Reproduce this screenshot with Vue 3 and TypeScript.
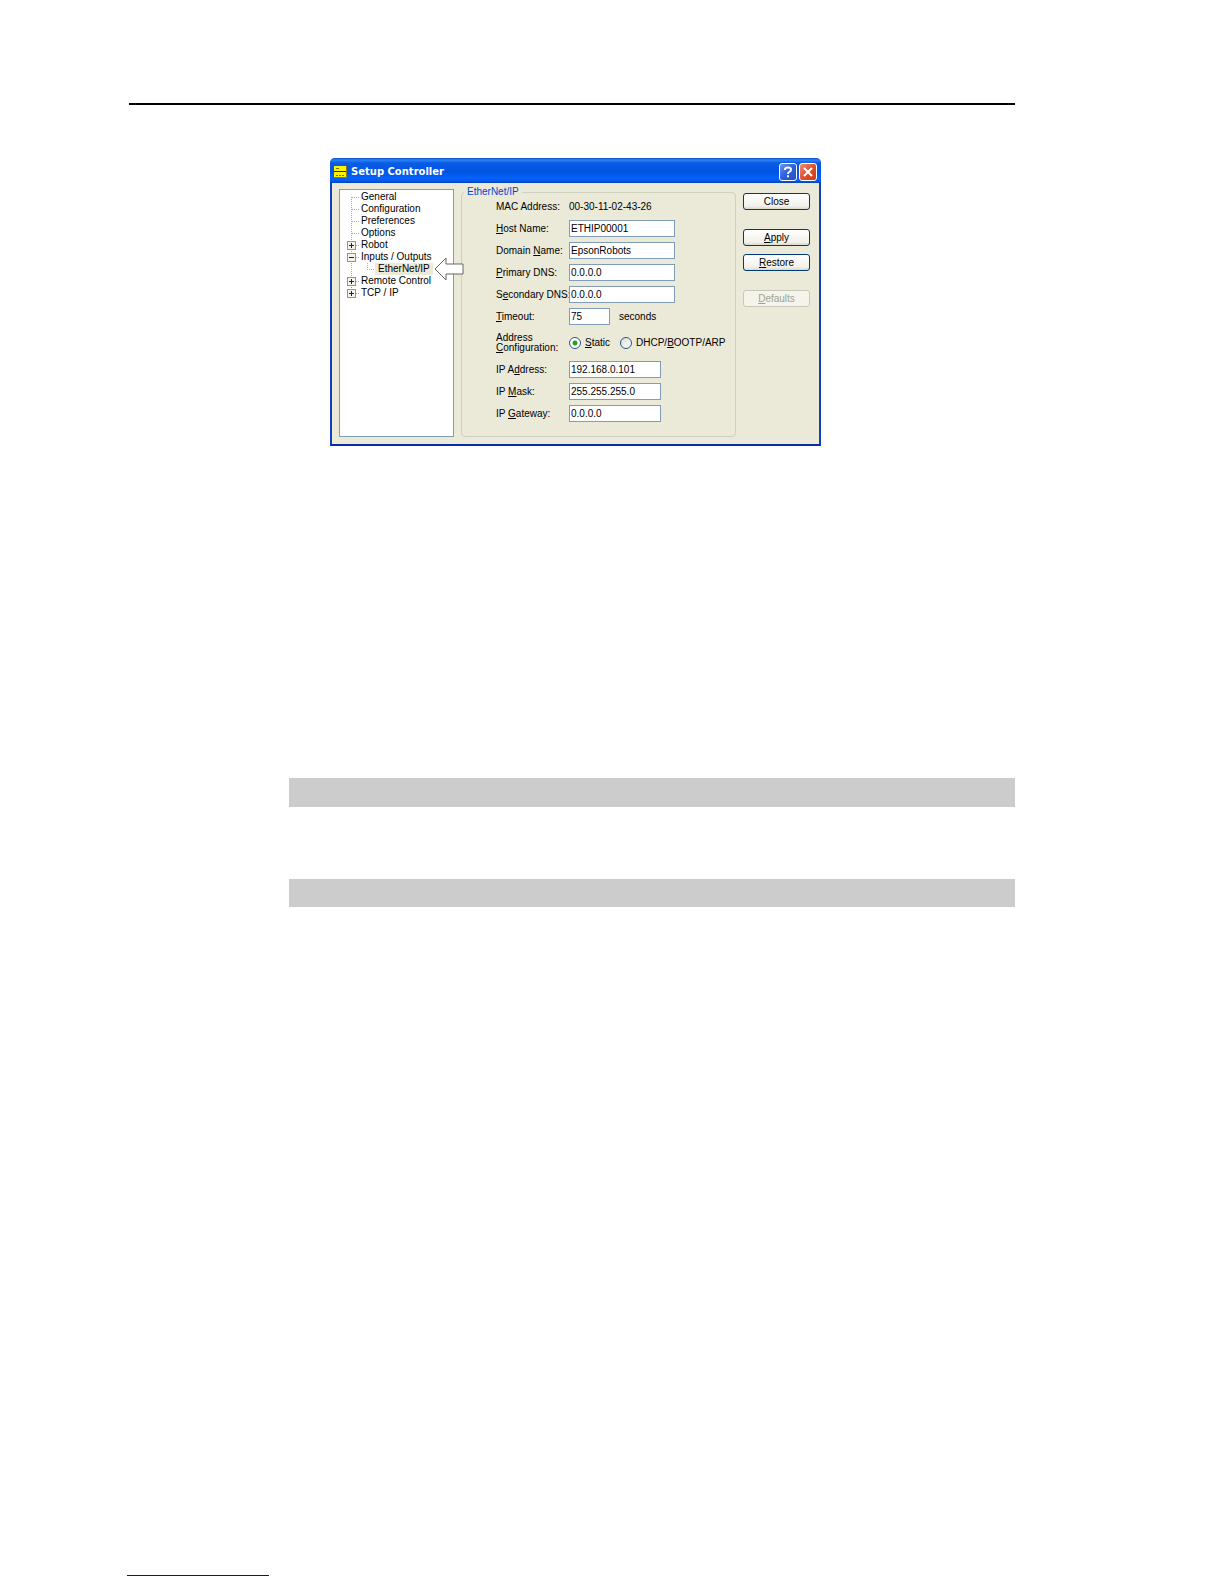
<script setup lang="ts">
import { ref } from 'vue'

type Caption = [before: string, key: string, after: string]

interface TreeRow {
  label: string
  box?: 'plus' | 'minus'
  child?: boolean
  first?: boolean
  last?: boolean
}

interface Field {
  id: string
  caption: Caption
  size: 'wide' | 'medium' | 'short'
  value: string
  unit?: string
}

const tree: TreeRow[] = [
  { label: 'General', first: true },
  { label: 'Configuration' },
  { label: 'Preferences' },
  { label: 'Options' },
  { label: 'Robot', box: 'plus' },
  { label: 'Inputs / Outputs', box: 'minus' },
  { label: 'EtherNet/IP', child: true },
  { label: 'Remote Control', box: 'plus' },
  { label: 'TCP / IP', box: 'plus', last: true },
]

const hostFields = ref<Field[]>([
  { id: 'host', caption: ['', 'H', 'ost Name:'], size: 'wide', value: 'ETHIP00001' },
  { id: 'domain', caption: ['Domain ', 'N', 'ame:'], size: 'wide', value: 'EpsonRobots' },
  { id: 'dns1', caption: ['', 'P', 'rimary DNS:'], size: 'wide', value: '0.0.0.0' },
  { id: 'dns2', caption: ['S', 'e', 'condary DNS:'], size: 'wide', value: '0.0.0.0' },
  { id: 'timeout', caption: ['', 'T', 'imeout:'], size: 'short', value: '75', unit: 'seconds' },
])

const ipFields = ref<Field[]>([
  { id: 'ip', caption: ['IP A', 'd', 'dress:'], size: 'medium', value: '192.168.0.101' },
  { id: 'mask', caption: ['IP ', 'M', 'ask:'], size: 'medium', value: '255.255.255.0' },
  { id: 'gateway', caption: ['IP ', 'G', 'ateway:'], size: 'medium', value: '0.0.0.0' },
])

const mode = ref('static')
</script>

<template>
  <div class="page">
    <header class="rule"></header>

    <section class="dialog">
      <div class="titlebar">
        <svg class="app-icon" width="13" height="12" viewBox="0 0 13 12">
          <rect width="13" height="12" fill="#fff200" />
          <path d="M0 5.5H13" stroke="#332f00" />
          <path d="M0 11.5H13M12.5 0V12" stroke="#8a7d00" />
          <path d="M2 2.5h3M2 9.5h2M5 9.5h2M8 9.5h2" stroke="#7a6c00" />
        </svg>
        <h1>Setup Controller</h1>
        <button class="cap help" type="button" aria-label="Help">
          <svg width="16" height="16" viewBox="0 0 16 16" fill="none" stroke="#fff" stroke-width="2">
            <path d="M5 6V5.500Q5 3.500 8 3.500T11 5.700Q11 7 9.300 7.800Q8 8.400 8 10M8 11.300v2" />
          </svg>
        </button>
        <button class="cap exit" type="button" aria-label="Close window">
          <svg width="16" height="16" viewBox="0 0 16 16" fill="none" stroke="#fff" stroke-width="2">
            <path d="M4 4l8 8M12 4l-8 8" />
          </svg>
        </button>
      </div>

      <div class="body">
        <ul class="tree">
          <li v-for="row in tree" :key="row.label" :class="{ child: row.child }">
            <svg :width="row.child ? 29 : 15" height="12" fill="none">
              <g stroke="#a8a8a8" stroke-dasharray="1 1">
                <path :d="`M5.500 ${row.first ? 6 : 0}V${row.last ? 6 : 12}`" />
                <path :d="row.child ? 'M21.500 0V6.500H29' : 'M6 6.500H13'" />
              </g>
              <g v-if="row.box">
                <rect x="1.500" y="2.500" width="8" height="8" fill="#f4f3ee" stroke="#8496a8" />
                <path :d="row.box === 'plus' ? 'M3 6.500H8M5.500 4V9' : 'M3 6.500H8'" stroke="#222" />
              </g>
            </svg>
            <span>{{ row.label }}</span>
            <svg v-if="row.child" class="pointer" width="30" height="24" viewBox="0 0 30 24">
              <path d="M1 12L12 1V7H29V17H12V23Z" fill="#fff" stroke="#666" />
            </svg>
          </li>
        </ul>

        <fieldset class="group">
          <legend>EtherNet/IP</legend>
          <div class="row">
            <span class="name">MAC Address:</span>
            <span>00-30-11-02-43-26</span>
          </div>
          <div v-for="f in hostFields" :key="f.id" class="row">
            <label class="name" :for="f.id">{{ f.caption[0] }}<u>{{ f.caption[1] }}</u>{{ f.caption[2] }}</label>
            <input :id="f.id" v-model="f.value" type="text" :class="f.size" />
            <span v-if="f.unit" class="unit">{{ f.unit }}</span>
          </div>
          <div class="row tall" role="radiogroup" aria-labelledby="mode-name">
            <span id="mode-name" class="name">Address<br /><u>C</u>onfiguration:</span>
            <label class="choice"><input v-model="mode" type="radio" value="static" /><span><u>S</u>tatic</span></label>
            <label class="choice"><input v-model="mode" type="radio" value="dhcp" /><span>DHCP/<u>B</u>OOTP/ARP</span></label>
          </div>
          <div v-for="f in ipFields" :key="f.id" class="row">
            <label class="name" :for="f.id">{{ f.caption[0] }}<u>{{ f.caption[1] }}</u>{{ f.caption[2] }}</label>
            <input :id="f.id" v-model="f.value" type="text" :class="f.size" />
          </div>
        </fieldset>

        <div class="actions">
          <button type="button">Close</button>
          <button type="button" class="section"><u>A</u>pply</button>
          <button type="button"><u>R</u>estore</button>
          <button type="button" class="section" disabled><u>D</u>efaults</button>
        </div>
      </div>
    </section>

    <div class="bands">
      <div class="band"></div>
      <div class="band"></div>
    </div>

    <footer class="footer-line"></footer>
  </div>
</template>

<style>
body {
  margin: 0;
  background: #fff;
}
</style>

<style scoped>
* {
  box-sizing: border-box;
}

.page {
  display: flex;
  flex-direction: column;
  min-height: 100vh;
  padding: 103px 209px 8px 129px;
  font: 10px/12px "Liberation Sans", Arial, sans-serif;
  color: #000;
}

.rule {
  height: 2px;
  background: #000;
}

.dialog {
  width: 100%;
  max-width: 491px;
  margin: 53px 0 0 201px;
  border: 2px solid #1240c0;
  border-top: 0;
  border-bottom-color: #0a2aa8;
  border-radius: 5px 5px 0 0;
  background: #ebe9d8;
}

.titlebar {
  display: flex;
  align-items: center;
  gap: 2px;
  height: 25px;
  margin: 0 -2px;
  padding: 2px 4px 0;
  border-radius: 5px 5px 0 0;
  background: linear-gradient(#0a50c8 0, #2b82f5 2px, #0a5ce6 5px, #0054e3 14px, #0562fa 20px, #0359ea 23px, #0340b8 25px);
}

.app-icon {
  flex: none;
}

.titlebar h1 {
  flex: 1;
  margin: 0 0 0 2px;
  font: bold 10px/12px "DejaVu Sans", Verdana, sans-serif;
  color: #fff;
}

.cap {
  display: grid;
  place-items: center;
  width: 18px;
  height: 18px;
  padding: 0;
  border: 1px solid #fff;
  border-radius: 3px;
}

.help {
  background: linear-gradient(135deg, #6c94f0, #2f60dc 50%, #2050c8);
}

.exit {
  background: linear-gradient(135deg, #ee9078, #e0502c 50%, #c83c18);
}

.body {
  display: flex;
  gap: 7px;
  padding: 3px 9px 7px 7px;
}

.tree {
  flex: 0 0 115px;
  margin: 3px 0 0;
  padding: 1px 0 0 6px;
  border: 1px solid #7f9db9;
  background: #fff;
  list-style: none;
}

.tree li {
  position: relative;
  display: flex;
  height: 12px;
  white-space: nowrap;
}

.tree svg {
  flex: none;
}

.child span {
  padding: 0 3px;
  background: #ebe9d8;
}

.pointer {
  position: absolute;
  top: -6px;
  left: 88px;
  z-index: 1;
}

.group {
  display: flex;
  flex-direction: column;
  gap: 5px;
  flex: 1;
  min-width: 0;
  margin: 0;
  padding: 0 0 14px 34px;
  border: 1px solid #d0d0bf;
  border-radius: 4px;
}

.group legend {
  margin-left: -32px;
  padding: 0 3px;
  color: #0046d5;
}

.row {
  display: flex;
  align-items: center;
  height: 17px;
  white-space: nowrap;
}

.row.tall {
  height: 26px;
}

.tall .name {
  line-height: 10px;
}

.name {
  flex: 0 0 73px;
  overflow: hidden;
}

u {
  text-underline-offset: 1px;
}

input[type='text'] {
  height: 17px;
  padding: 0 1px;
  border: 1px solid #7f9db9;
  background: #fff;
  font: inherit;
  color: inherit;
}

.wide {
  width: 106px;
}

.medium {
  width: 92px;
}

.short {
  width: 41px;
}

.unit {
  margin-left: 9px;
}

.choice {
  display: flex;
  align-items: center;
  gap: 4px;
  margin-right: 10px;
}

.choice:last-child {
  margin-right: 0;
}

input[type='radio'] {
  appearance: none;
  width: 12px;
  height: 12px;
  margin: 0;
  border: 1px solid #2c5484;
  border-radius: 50%;
  background: linear-gradient(135deg, #dcdcd4, #fff);
}

input[type='radio']:checked {
  background: radial-gradient(circle, #21a121 2px, #fff 3px);
}

.actions {
  display: flex;
  flex-direction: column;
  flex: 0 0 67px;
  gap: 8px;
  padding-top: 7px;
}

.actions button {
  height: 17px;
  padding: 0;
  border: 1px solid #003c74;
  border-radius: 3px;
  background: linear-gradient(#fff, #f2f1ea 80%, #dcd8cc);
  font: inherit;
  line-height: 14px;
  color: #000;
}

.actions .section {
  margin-top: 11px;
}

.actions button:disabled {
  border-color: #c9c7ba;
  background: #f5f4ea;
  color: #a1a192;
}

.bands {
  display: flex;
  flex-direction: column;
  gap: 72px;
  margin: 332px 0 0 160px;
}

.band {
  height: 29px;
  background: #ccc;
}

.band:last-child {
  height: 28px;
}

.footer-line {
  width: 142px;
  height: 1px;
  margin: auto 0 0 -2px;
  background: #101080;
}
</style>
